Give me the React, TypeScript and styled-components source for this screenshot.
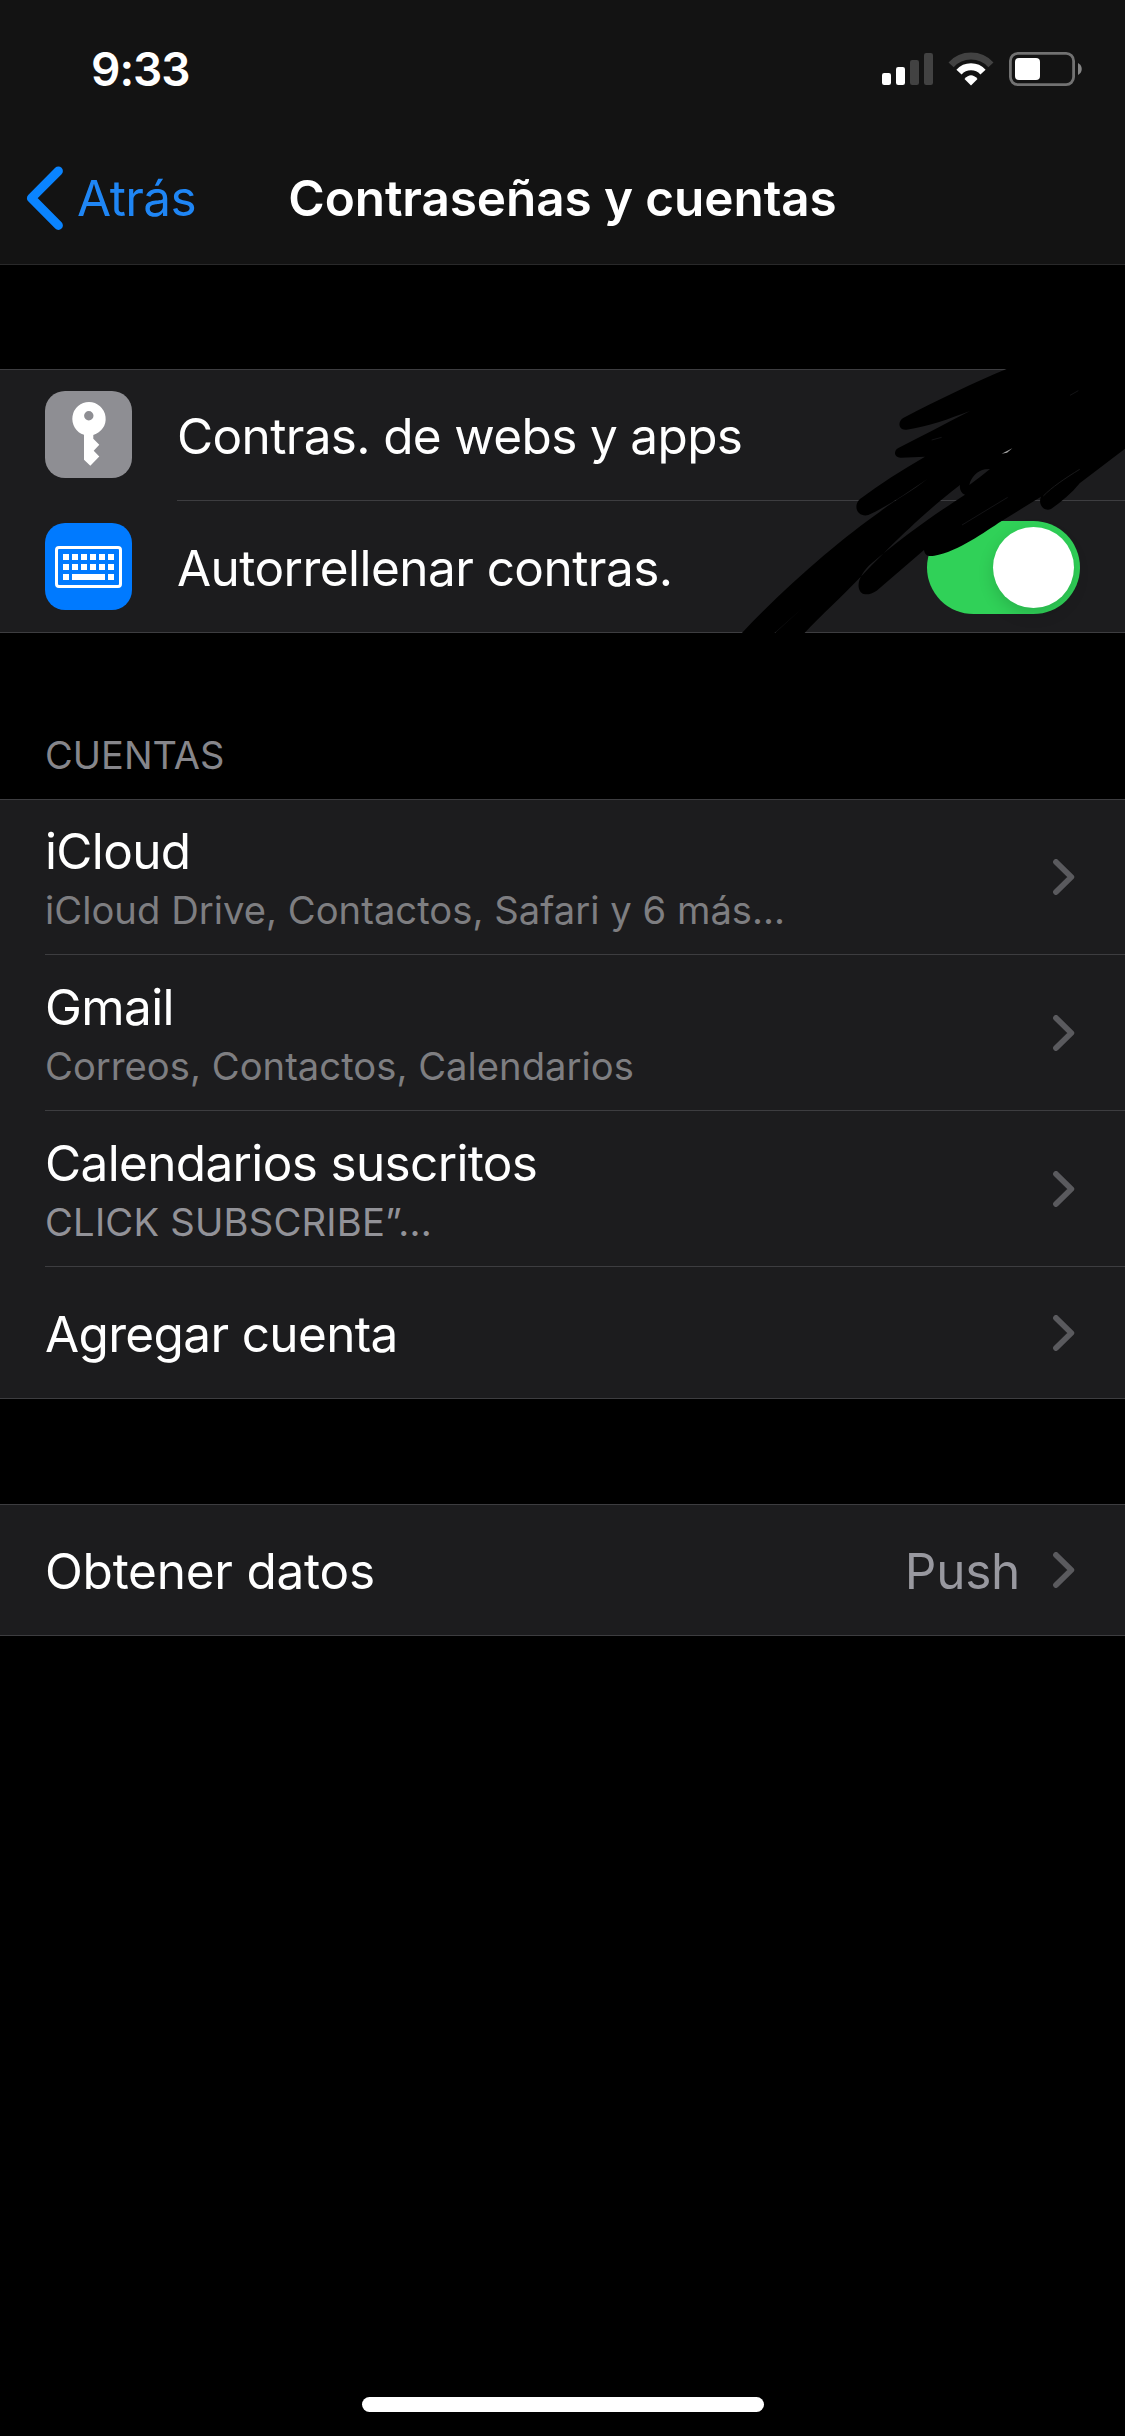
import React from "react";
import styled, { createGlobalStyle } from "styled-components";

const line = "#3d3d40";

const GlobalStyle = createGlobalStyle`
  * { box-sizing: border-box; }
  body {
    margin: 0;
    background: #000;
    font-family: Inter, Roboto, "Liberation Sans", sans-serif;
    color: #fff;
  }
  svg { display: block; flex: none; }
`;

const Screen = styled.div`
  width: 1125px;
  height: 2436px;
  display: flex;
  flex-direction: column;
  background: #000;
  overflow: hidden;
`;

const Header = styled.header`
  height: 265px;
  background: #131313;
  border-bottom: 1px solid #29292a;
`;

const StatusBar = styled.div`
  height: 132px;
  padding: 38px 43px 0 91px;
  display: flex;
  justify-content: space-between;
  align-items: flex-start;
`;

const Clock = styled.span`
  padding-top: 1px;
  font-size: 46px;
  line-height: 60px;
  font-weight: 600;
  letter-spacing: -1px;
`;

const StatusIcons = styled.div`
  padding-top: 14px;
`;

const NavBar = styled.nav`
  height: 132px;
  display: grid;
  grid-template-columns: 1fr auto 1fr;
  align-items: center;
`;

const BackButton = styled.div`
  display: flex;
  align-items: center;
  gap: 14px;
  padding-left: 25px;
  font-size: 49.5px;
  line-height: 60px;
  letter-spacing: -0.55px;
  color: #1f86f5;
`;

const Title = styled.h1`
  margin: 0;
  font-size: 49.5px;
  line-height: 60px;
  font-weight: 600;
  letter-spacing: -0.1px;
`;

const Group = styled.section<{ $gap?: number }>`
  position: relative;
  margin-top: ${(p) => p.$gap ?? 0}px;
  background: #1c1c1e;
  border-top: 1px solid ${line};
  border-bottom: 1px solid ${line};
`;

const SectionTitle = styled.h2`
  margin: 0;
  height: 166px;
  padding: 99px 45px 0;
  font-size: 38px;
  line-height: 46px;
  font-weight: 400;
  color: #86868b;
`;

const Row = styled.div<{ $height: number }>`
  display: flex;
  align-items: center;
  height: ${(p) => p.$height}px;
  padding-left: 45px;
`;

const RowBody = styled.div<{ $divider?: boolean; $right: number }>`
  flex: 1;
  height: 100%;
  display: flex;
  align-items: center;
  padding-right: ${(p) => p.$right}px;
  border-bottom: ${(p) => (p.$divider ? `1px solid ${line}` : "none")};
`;

const AppIcon = styled.div<{ $color: string; $lift: number }>`
  width: 87px;
  height: 87px;
  margin: 0 45px ${(p) => p.$lift}px 0;
  border-radius: 20px;
  background: ${(p) => p.$color};
`;

const TextBlock = styled.div`
  flex: 1;
  display: flex;
  flex-direction: column;
  gap: 6px;
`;

const Label = styled.span<{ $tracking?: number; $drop?: number }>`
  padding-top: ${(p) => p.$drop ?? 0}px;
  font-size: 49.5px;
  line-height: 60px;
  letter-spacing: ${(p) => p.$tracking ?? -0.65}px;
  white-space: nowrap;
`;

const Detail = styled.span<{ $bright?: boolean }>`
  font-size: 38.2px;
  line-height: 46px;
  letter-spacing: ${(p) => (p.$bright ? 0.2 : 0.02)}px;
  color: ${(p) => (p.$bright ? "#929298" : "#7e7e81")};
  white-space: nowrap;
`;

const Value = styled.span`
  padding-top: 2px;
  margin-right: 33px;
  font-size: 49.5px;
  line-height: 60px;
  letter-spacing: -0.27px;
  color: #98989f;
`;

const Toggle = styled.div`
  width: 153px;
  height: 93px;
  margin-top: 2px;
  padding: 6px;
  display: flex;
  justify-content: flex-end;
  border-radius: 47px;
  background: #30d158;
`;

const Knob = styled.div`
  width: 81px;
  height: 81px;
  border-radius: 50%;
  background: #fff;
  box-shadow: 0 6px 16px rgba(0, 0, 0, 0.15);
`;

const Scribble = styled.svg`
  position: absolute;
  left: 725px;
  top: -20px;
`;

const Footer = styled.footer`
  margin-top: auto;
  padding-bottom: 24px;
  display: flex;
  justify-content: center;
`;

const HomeIndicator = styled.div`
  width: 402px;
  height: 15px;
  border-radius: 8px;
  background: #fff;
`;

const StatusGlyphs = () => (
  <svg width="200" height="34" viewBox="0 0 200 34" fill="none">
    <rect x="0" y="21" width="9" height="12" rx="2.2" fill="#fff" />
    <rect x="14" y="15" width="9" height="18" rx="2.2" fill="#fff" />
    <rect x="28" y="8" width="9" height="25" rx="2.2" fill="#424242" />
    <rect x="42" y="1" width="9" height="32" rx="2.2" fill="#424242" />
    <path d="M69.1 12.8A27 27 0 0 1 108.9 12.8" stroke="#424242" strokeWidth="7" />
    <path d="M77 20.1A16.2 16.2 0 0 1 101 20.1" stroke="#fff" strokeWidth="7" />
    <path d="M82.5 27Q89 19.5 95.5 27L89 33.4Z" fill="#fff" />
    <rect x="128.4" y="1.4" width="63.2" height="31.2" rx="7.5" stroke="#727272" strokeWidth="2.8" />
    <rect x="133" y="6" width="25" height="22" rx="4" fill="#fff" />
    <path d="M196 11C201 13.5 201 20.5 196 23Z" fill="#858585" />
  </svg>
);

const BackChevron = () => (
  <svg width="38" height="66" viewBox="0 0 38 66" fill="none">
    <path d="M33.4 6L6.4 33.2L33.4 60.4" stroke="#0a84ff" strokeWidth="9" strokeLinecap="round" strokeLinejoin="round" />
  </svg>
);

const Chevron = () => (
  <svg width="22" height="36" viewBox="0 0 22 36" fill="none">
    <path d="M3 3L18.3 18L3 33" stroke="#5a5a5e" strokeWidth="5.8" strokeLinecap="round" strokeLinejoin="round" />
  </svg>
);

const KeyGlyph = () => (
  <svg width="87" height="87" viewBox="0 0 87 87">
    <path
      fill="#fff"
      fillRule="evenodd"
      d="M44 11A16.8 16.8 0 0 0 39 43.8V68.7L45.3 74.8L54.3 65.4L48.7 59.7L54.3 53.8L48.3 47.7V44A16.8 16.8 0 0 0 44 11ZM43.8 20A4.7 4.7 0 1 1 43.8 29.4A4.7 4.7 0 1 1 43.8 20Z"
    />
  </svg>
);

const keyColumns = [18, 27, 36, 45, 54, 63];

const KeyboardGlyph = () => (
  <svg width="87" height="87" viewBox="0 0 87 87" fill="#fff">
    <rect x="11.5" y="24.5" width="64" height="39" rx="2.5" fill="none" stroke="#fff" strokeWidth="3" />
    {keyColumns.map((x) => (
      <React.Fragment key={x}>
        <rect x={x} y="31" width="6" height="6" />
        <rect x={x} y="41" width="6" height="6" />
      </React.Fragment>
    ))}
    <rect x="18" y="51" width="6" height="6" />
    <rect x="27" y="51" width="33" height="6" />
    <rect x="63" y="51" width="6" height="6" />
  </svg>
);

const Marker = () => (
  <Scribble width="400" height="300" viewBox="0 0 1200 900">
    <path
      fill="#000"
      fillRule="evenodd"
      d="M852 54C740 100 640 150 536 203C516 214 520 243 545 239C610 230 670 207 735 183C660 222 590 258 520 294C503 304 509 324 528 323L600 320C530 360 465 402 405 447C381 470 400 503 430 495C490 468 550 425 607 387C560 425 510 450 465 485C350 565 180 710 48 852L145 852L235 772L147 852L236 852C290 795 350 740 400 688C460 625 580 500 705 405C703 418 708 430 720 434C640 485 520 570 440 640C415 660 395 695 402 716C408 738 432 737 455 722L597 600C600 615 608 621 628 617C700 605 780 545 830 513L948 440C938 462 956 486 978 477C1010 455 1040 430 1064 400L1200 296V54Z
      M733 405C738 382 757 362 780 358L795 357L766 380Z"
    />
    <path d="M830 311L862 295L846 308Z" fill="#a5a5a5" />
    <path d="M711 525L848 442M1035 136L1060 122M620 270L650 262" stroke="#1d1d1f" strokeWidth="2" />
    <path d="M1064 358C1020 385 980 412 955 438" stroke="#19191a" strokeWidth="3" fill="none" />
  </Scribble>
);

type Account = { name: string; detail?: string; bright?: boolean; height: number };

const accounts: Account[] = [
  { name: "iCloud", detail: "iCloud Drive, Contactos, Safari y 6 más...", height: 155 },
  { name: "Gmail", detail: "Correos, Contactos, Calendarios", height: 156 },
  { name: "Calendarios suscritos", detail: "CLICK SUBSCRIBE”...", bright: true, height: 156 },
  { name: "Agregar cuenta", height: 131 },
];

export default function App() {
  return (
    <Screen>
      <GlobalStyle />
      <Header>
        <StatusBar>
          <Clock>9:33</Clock>
          <StatusIcons>
            <StatusGlyphs />
          </StatusIcons>
        </StatusBar>
        <NavBar>
          <BackButton>
            <BackChevron />
            Atrás
          </BackButton>
          <Title>Contraseñas y cuentas</Title>
        </NavBar>
      </Header>

      <Group $gap={104}>
        <Row $height={131}>
          <AppIcon $color="#8e8e93" $lift={2}>
            <KeyGlyph />
          </AppIcon>
          <RowBody $divider $right={45}>
            <Label $drop={2}>Contras. de webs y apps</Label>
          </RowBody>
        </Row>
        <Row $height={131}>
          <AppIcon $color="#007aff" $lift={1}>
            <KeyboardGlyph />
          </AppIcon>
          <RowBody $right={45}>
            <TextBlock>
              <Label $drop={3} $tracking={-0.55}>Autorrellenar contras.</Label>
            </TextBlock>
            <Toggle>
              <Knob />
            </Toggle>
          </RowBody>
        </Row>
        <Marker />
      </Group>

      <SectionTitle>CUENTAS</SectionTitle>
      <Group>
        {accounts.map((a, i) => (
          <Row key={a.name} $height={a.height}>
            <RowBody $divider={i < accounts.length - 1} $right={50}>
              <TextBlock>
                <Label $drop={a.detail ? 0 : 3}>{a.name}</Label>
                {a.detail && <Detail $bright={a.bright}>{a.detail}</Detail>}
              </TextBlock>
              <Chevron />
            </RowBody>
          </Row>
        ))}
      </Group>

      <Group $gap={105}>
        <Row $height={130}>
          <RowBody $right={50}>
            <TextBlock>
              <Label $drop={2} $tracking={-0.25}>Obtener datos</Label>
            </TextBlock>
            <Value>Push</Value>
            <Chevron />
          </RowBody>
        </Row>
      </Group>

      <Footer>
        <HomeIndicator />
      </Footer>
    </Screen>
  );
}
